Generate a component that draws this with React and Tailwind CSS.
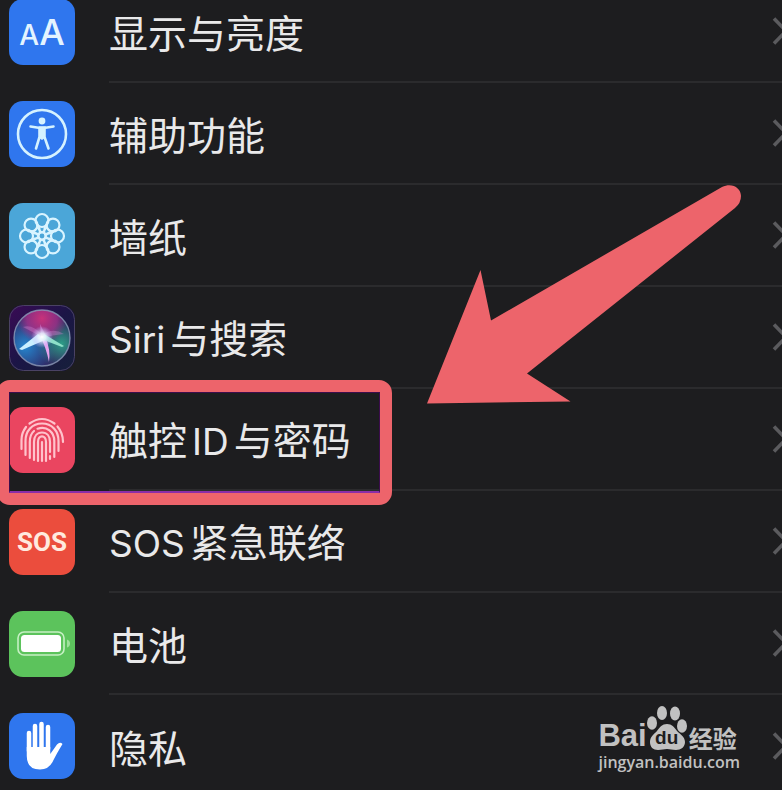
import React from "react";

const rows = [
  { id: "display", label: ["显示与亮度"], color: "bg-[#2f76ee]", Icon: TextSizeIcon },
  { id: "accessibility", label: ["辅助功能"], color: "bg-[#2f76ee]", Icon: AccessibilityIcon },
  { id: "wallpaper", label: ["墙纸"], color: "bg-[#4ba6d8]", Icon: FlowerIcon },
  { id: "siri", label: ["Siri", "与搜索"], color: "bg-[#1d1544]", Icon: SiriIcon },
  { id: "touch-id", label: ["触控", "ID", "与密码"], color: "bg-[#ea4560]", Icon: FingerprintIcon, highlighted: true },
  { id: "sos", label: ["SOS", "紧急联络"], color: "bg-[#eb4d3d]", Icon: SosIcon },
  { id: "battery", label: ["电池"], color: "bg-[#5cc35c]", Icon: BatteryIcon },
  { id: "privacy", label: ["隐私"], color: "bg-[#2f76ee]", Icon: HandIcon },
];

function TextSizeIcon() {
  return (
    <span className="flex items-baseline font-['Inter',sans-serif] leading-none font-medium text-[#e4f4ff]">
      <span className="text-[28px]">A</span>
      <span className="text-[36px]">A</span>
    </span>
  );
}

function AccessibilityIcon() {
  return (
    <svg className="size-full" viewBox="0 0 66 66" fill="none" stroke="#d5f2ff">
      <circle cx="33" cy="33" r="24" strokeWidth="2.6" />
      <circle cx="33" cy="20" r="3.4" fill="#d5f2ff" stroke="none" />
      <path d="M21.500 25.500L31 27H35L44.500 25.500" strokeWidth="2.600" strokeLinecap="round" />
      <path
        d="M30.500 26.500H35.500V36L39.500 47.500M30.500 26.500V36L27 47.500"
        strokeWidth="2.600"
        strokeLinecap="round"
      />
      <path d="M30 27H36V37L33 39L30 37Z" fill="#d5f2ff" stroke="none" />
    </svg>
  );
}

function FlowerIcon() {
  const angles = [0, 45, 90, 135, 180, 225, 270, 315];
  return (
    <svg className="size-full" viewBox="0 0 66 66" fill="none" stroke="#d9f4ff" strokeWidth="2.200">
      {angles.map((angle) => (
        <g key={angle} transform={`rotate(${angle} 33 33)`}>
          <circle cx="33" cy="17.5" r="6.5" />
          <path d="M28 21C28 26 31 28 33 29.500C35 28 38 26 38 21" strokeWidth="1.800" />
        </g>
      ))}
      <circle cx="33" cy="33" r="3.5" fill="#4ba6d8" />
    </svg>
  );
}

function SiriIcon() {
  return (
    <svg className="size-full" viewBox="0 0 66 66" fill="none">
      <defs>
        <linearGradient id="siri-back" x1="0" y1="0" x2="1" y2="1">
          <stop offset="0" stopColor="#3a0a55" />
          <stop offset="0.500" stopColor="#1b1546" />
          <stop offset="1" stopColor="#16203a" />
        </linearGradient>
        <radialGradient id="siri-pink" cx="0.500" cy="0.150" r="0.450">
          <stop offset="0" stopColor="#c8327a" />
          <stop offset="0.600" stopColor="#a3308a" stopOpacity="0.800" />
          <stop offset="1" stopColor="#a3308a" stopOpacity="0" />
        </radialGradient>
        <radialGradient id="siri-blue" cx="0.200" cy="0.650" r="0.550">
          <stop offset="0" stopColor="#2586cf" />
          <stop offset="1" stopColor="#2586cf" stopOpacity="0" />
        </radialGradient>
        <radialGradient id="siri-green" cx="0.850" cy="0.600" r="0.450">
          <stop offset="0" stopColor="#2d9c86" />
          <stop offset="1" stopColor="#2d9c86" stopOpacity="0" />
        </radialGradient>
        <radialGradient id="siri-glow">
          <stop offset="0" stopColor="#fff" />
          <stop offset="0.350" stopColor="#e9f4ff" stopOpacity="0.850" />
          <stop offset="1" stopColor="#b9a8ff" stopOpacity="0" />
        </radialGradient>
      </defs>
      <rect width="66" height="66" rx="14" fill="url(#siri-back)" />
      <rect x="0.500" y="0.500" width="65" height="65" rx="14" stroke="#4a4264" />
      <circle cx="33" cy="33" r="28" fill="#30235f" />
      <circle cx="33" cy="33" r="28" fill="url(#siri-blue)" />
      <circle cx="33" cy="33" r="28" fill="url(#siri-green)" />
      <circle cx="33" cy="33" r="28" fill="url(#siri-pink)" />
      <path d="M14 22Q24 19 33 30Q44 22 55 29Q43 30 34 33Q22 26 14 22Z" fill="#d68ad6" fillOpacity="0.350" />
      <path d="M29 29L10 44L13 45L36 35Z" fill="#c9efff" />
      <path d="M31 31Q37 42 40 57Q42 45 36 31Z" fill="#e6a2ee" />
      <path d="M35 29L55 41L53 42L32 34Z" fill="#8de0c8" />
      <path d="M32 31L31 19L36 29Z" fill="#d889da" fillOpacity="0.600" />
      <circle cx="33" cy="32" r="11" fill="url(#siri-glow)" />
      <circle cx="33" cy="33" r="28" stroke="#8f9cba" strokeOpacity="0.800" strokeWidth="1.400" />
    </svg>
  );
}

function FingerprintIcon() {
  return (
    <svg
      className="size-full"
      viewBox="0 0 66 66"
      fill="none"
      stroke="#ffc3cc"
      strokeWidth="2.200"
      strokeLinecap="round"
    >
      <path d="M20.500 16.500Q33 7.500 45.500 16.500" />
      <path d="M12.500 42V33Q12.500 26 17 20" />
      <path d="M48.500 19.500Q54 26 54 35" />
      <path d="M16.500 48V34C16.500 24 23 16.500 33 16.500C43 16.500 49.500 24 49.500 34V44" />
      <path d="M20.800 51V35C20.800 30 22 26.500 25 24" />
      <path d="M28.500 21.700C38 18.500 45.300 25 45.300 34V50" />
      <path d="M25 53V35C25 29.500 28 25.500 33 25.500C38 25.500 41 29.500 41 35V45" />
      <path d="M41 49V52" />
      <path d="M29 54V35C29 27.500 37 27.500 37 35V54" />
      <path d="M33 35V54" />
    </svg>
  );
}

function SosIcon() {
  return (
    <span className="font-['Roboto',sans-serif] text-[26px] font-bold leading-none text-[#ffeadf]">
      SOS
    </span>
  );
}

function BatteryIcon() {
  return (
    <svg className="size-full" viewBox="0 0 66 66" fill="none">
      <rect x="9" y="21" width="46" height="23" rx="6" stroke="#c6f0c4" strokeWidth="1.600" />
      <rect x="12" y="24" width="40" height="17" rx="3.500" fill="#fff" />
      <path d="M58 28.500Q61 29.500 61 32.500T58 36.500Z" fill="#9fe09d" />
    </svg>
  );
}

function HandIcon() {
  return (
    <svg className="size-full" viewBox="0 0 66 66" fill="none" stroke="#fff" strokeLinecap="round">
      <path d="M20 20V38M26 13V36M32.500 11V36M39 14V36" strokeWidth="4.500" />
      <path
        d="M17.750 34H41.250V41L48 31.500Q51 28.500 53.500 31Q48 40 44.500 47Q40.500 56.500 31 56.500Q17.750 56.500 17.750 43Z"
        fill="#fff"
        stroke="none"
      />
    </svg>
  );
}

function Chevron() {
  return (
    <svg
      className="-mr-1.5 h-7 w-4 shrink-0"
      viewBox="0 0 16 28"
      fill="none"
      stroke="#5b5b5e"
      strokeWidth="3.500"
    >
      <path d="M2 1.500L14 14L2 26.500" />
    </svg>
  );
}

function SettingsRow({ row, last }) {
  const { Icon } = row;

  return (
    <li className="relative">
      <a href={`#${row.id}`} className="flex h-[102px] items-center gap-[34px] pl-[9px]">
        <span
          className={`flex size-[66px] shrink-0 items-center justify-center overflow-hidden rounded-[14px] ${row.color}`}
        >
          <Icon />
        </span>
        <span
          className={`flex h-full min-w-0 flex-1 items-center justify-between ${
            last ? "" : "border-b-2 border-[#2b2b2d]"
          }`}
        >
          <span className="flex items-baseline gap-[5px] whitespace-nowrap">
            {row.label.map((part) => (
              <span
                key={part}
                className={
                  /^[A-Za-z]+$/.test(part)
                    ? "font-['Inter',sans-serif] text-[37px] leading-none"
                    : "font-['Noto_Sans_CJK_SC',sans-serif] text-[39px] leading-none"
                }
              >
                {part}
              </span>
            ))}
          </span>
          <Chevron />
        </span>
      </a>
      {row.highlighted && (
        <div className="pointer-events-none absolute -top-[9px] -left-[3px] h-[125px] w-[395px] rounded-[13px] border-12 border-[#ed646b]">
          <div className="h-full border border-b-2 border-[#3b0d4c] border-b-[#8a2da8]" />
        </div>
      )}
    </li>
  );
}

function Watermark() {
  return (
    <div className="absolute right-[42px] bottom-4 flex flex-col text-[#c1c1c1]">
      <div className="flex items-end">
        <span className="font-['Liberation_Sans',sans-serif] text-[31px] leading-7 font-bold">
          Bai
        </span>
        <span className="relative flex h-11 w-10 items-end justify-center">
          <svg className="absolute inset-0 size-full" viewBox="0 0 40 44" fill="currentColor">
            <ellipse cx="5" cy="17" rx="5" ry="6.800" />
            <ellipse cx="15" cy="7" rx="5" ry="7" />
            <ellipse cx="28" cy="7.500" rx="5" ry="7" />
            <ellipse cx="35" cy="20" rx="5" ry="6.800" />
            <path d="M20 18C25 18 27 21 30 25C33 28 38 31 38 36C38 41 34 44 29 44C25 44 23 43 20 43C17 43 15 44 11 44C6 44 3 41 3 36C3 31 7 28 10 25C13 21 15 18 20 18Z" />
          </svg>
          <span className="relative font-['Liberation_Sans',sans-serif] text-[19px] leading-6 font-bold text-[#1d1d1f]">
            du
          </span>
        </span>
        <span className="ml-0.5 font-['Noto_Sans_CJK_SC',sans-serif] text-[24px] leading-6 font-bold">
          经验
        </span>
      </div>
      <span className="font-['Open_Sans',sans-serif] text-[16px] leading-6 font-semibold">
        jingyan.baidu.com
      </span>
    </div>
  );
}

function App() {
  return (
    <main className="relative h-screen overflow-hidden bg-[#1d1d1f] text-[#e9e9ea]">
      <ul className="-mt-[19px]">
        {rows.map((row, index) => (
          <SettingsRow key={row.id} row={row} last={index === rows.length - 1} />
        ))}
      </ul>

      {/* Arrow pointing at the highlighted row */}
      <svg
        className="pointer-events-none absolute top-[184px] left-[426px] h-[220px] w-[316px]"
        viewBox="426 184 316 220"
        fill="#ed646b"
      >
        <path d="M427 403.500L480.500 270L491 320.500L722 187C732 182 741 188 741 196Q741 203 735 208L527 373.500L570.500 401.500Z" />
      </svg>

      <Watermark />
    </main>
  );
}

export default App;
